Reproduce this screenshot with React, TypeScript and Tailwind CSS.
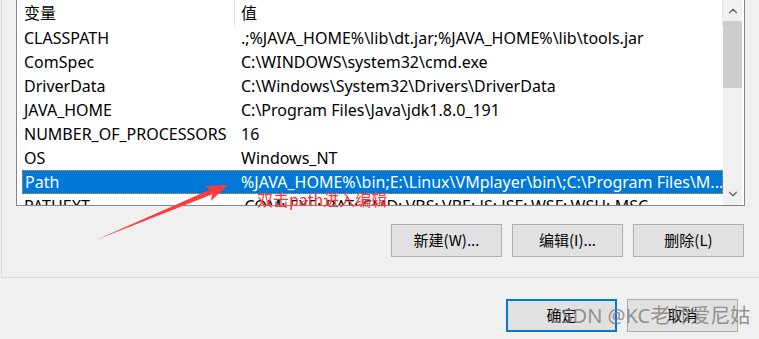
import { ChevronDown, ChevronUp } from 'lucide-react'

// variables de entorno del sistema, tal como salen en la lista
const VARS = [
  { name: 'CLASSPATH', value: '.;%JAVA_HOME%\\lib\\dt.jar;%JAVA_HOME%\\lib\\tools.jar' },
  { name: 'ComSpec', value: 'C:\\WINDOWS\\system32\\cmd.exe' },
  { name: 'DriverData', value: 'C:\\Windows\\System32\\Drivers\\DriverData' },
  { name: 'JAVA_HOME', value: 'C:\\Program Files\\Java\\jdk1.8.0_191' },
  { name: 'NUMBER_OF_PROCESSORS', value: '16' },
  { name: 'OS', value: 'Windows_NT' },
  {
    name: 'Path',
    value: '%JAVA_HOME%\\bin;E:\\Linux\\VMplayer\\bin\\;C:\\Program Files\\M...',
    selected: true,
  },
  { name: 'PATHEXT', value: '.COM;.EXE;.BAT;.CMD;.VBS;.VBE;.JS;.JSE;.WSF;.WSH;.MSC' },
]

const FONT = "font-['Noto_Sans','Noto_Sans_CJK_SC',sans-serif]"

function Boton({ children, focused }: { children: React.ReactNode; focused?: boolean }) {
  return (
    <button
      className={
        'flex h-[33px] w-[111px] items-center justify-center bg-[#e1e1e1] text-[15px] text-black ' +
        (focused ? 'border-2 border-[#0078d7]' : 'border border-[#adadad]')
      }
    >
      {children}
    </button>
  )
}

export default function App() {
  return (
    <div className={`relative h-[339px] w-[759px] overflow-hidden bg-[#f0f0f0] ${FONT}`}>
      {/* marco del grupo, solo se ven el borde izquierdo y el inferior */}
      <div className="ml-[1px] h-[278px] border-b border-l border-[#dcdcdc] pl-[14px]">
        <div className="flex h-[206px] w-[729px] border-x border-b border-[#828790] bg-white">
          <div className="flex w-[706px] flex-col overflow-hidden pl-[5px]">
            {/* cabecera de columnas */}
            <div className="flex h-[26px] shrink-0 items-center text-[16px] text-black">
              <span className="w-[212px] pl-[2px]">变量</span>
              <span className="h-full w-px bg-[#e5e5e5]" />
              <span className="flex-1 pl-[6px]">值</span>
              <span className="h-full w-px bg-[#e5e5e5]" />
            </div>
            {VARS.map((v) => (
              <div
                key={v.name}
                className={
                  'flex h-[24px] shrink-0 items-center text-[16px] whitespace-nowrap ' +
                  (v.selected
                    ? 'border border-dotted border-[#d88c3c] bg-[#0078d7] text-white'
                    : 'text-black')
                }
              >
                <span className={v.selected ? 'w-[218px] pl-[2px]' : 'w-[219px] pl-[2px]'}>
                  {v.name}
                </span>
                <span className="min-w-0 flex-1 overflow-hidden">{v.value}</span>
              </div>
            ))}
          </div>
          {/* barra de desplazamiento */}
          <div className="flex w-[19px] flex-col items-center bg-[#f0f0f0]">
            <div className="flex h-[21px] w-full items-center justify-center">
              <ChevronUp size={14} strokeWidth={2} className="text-[#606060]" />
            </div>
            <div className="h-[67px] w-full bg-[#cdcdcd]" />
            <div className="flex-1" />
            <div className="flex h-[22px] w-full items-center justify-center">
              <ChevronDown size={14} strokeWidth={2} className="text-[#606060]" />
            </div>
          </div>
          <div className="w-[2px]" />
        </div>

        <div className="mt-[18px] flex w-[729px] justify-end gap-[10px] pr-[1px] font-['Noto_Sans_CJK_SC',sans-serif]">
          <Boton>新建(W)...</Boton>
          <Boton>编辑(I)...</Boton>
          <Boton>删除(L)</Boton>
        </div>
      </div>

      <div className="mt-[21px] flex justify-end gap-[10px] pr-[21px] font-['Noto_Sans_CJK_SC',sans-serif]">
        <Boton focused>确定</Boton>
        <Boton>取消</Boton>
      </div>

      {/* flecha roja y anotación encima de la captura */}
      <svg className="pointer-events-none absolute left-0 top-0" width="759" height="339">
        <polygon
          points="96,240 210.4,189.6 204.6,186.1 228,185 210.8,200.9 212.4,194.2"
          fill="#ff3b3b"
        />
      </svg>
      <span className="absolute left-[257px] top-[188px] font-['Noto_Sans_CJK_SC',sans-serif] text-[16px] leading-[22px] text-[#ff3333]">
        双击path进入编辑
      </span>

      <span className="pointer-events-none absolute left-[549px] top-[302px] font-['Noto_Sans','Noto_Sans_CJK_SC',sans-serif] text-[20px] leading-[28px] text-[#7a7a7a]/80">
        CSDN @KC老师爱尼姑
      </span>
    </div>
  )
}
